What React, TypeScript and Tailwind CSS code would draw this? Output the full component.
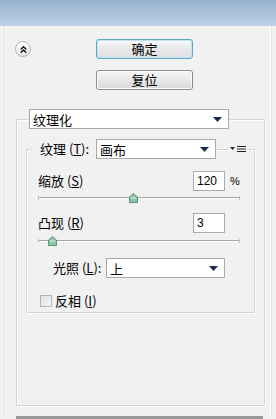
import { ChevronsUp } from "lucide-react";

function Arrow() {
  return (
    <svg width="9" height="5" viewBox="0 0 9 5">
      <path d="M0 0 H9 L4.5 5 Z" fill="#1c2a52" />
    </svg>
  );
}

function Select({ text, w }: { text: string; w: string }) {
  return (
    <div
      className={`${w} h-[20px] bg-white border border-[#a9a9a9] flex items-center justify-between pl-[3px] pr-[6px] text-[13px] leading-none text-black`}
    >
      <span>{text}</span>
      <Arrow />
    </div>
  );
}

function NumBox({ value }: { value: string }) {
  return (
    <div className="w-[32px] h-[20px] bg-white border border-[#a5acb5] flex items-center pl-[3px] text-[12px] text-black leading-none font-['Liberation_Sans',sans-serif]">
      {value}
    </div>
  );
}

function Slider({ pos }: { pos: number }) {
  return (
    <div className="relative h-[10px] w-[202px] flex items-center">
      <div className="w-full h-[2px] border-t border-[#a3a3a3] border-b border-b-white" />
      <div className="absolute left-0 top-[3px] w-[1px] h-[4px] bg-[#c0c0c0]" />
      <div className="absolute right-0 top-[3px] w-[1px] h-[4px] bg-[#c0c0c0]" />
      <svg
        className="absolute top-0"
        style={{ left: pos - 4 }}
        width="9"
        height="10"
        viewBox="0 0 9 10"
      >
        <path d="M4.5 0.5 L8.5 4 V9.5 H0.5 V4 Z" fill="#8fc4a8" stroke="#5f8f76" />
        <path d="M2 5 H7" stroke="#d8efe2" />
      </svg>
    </div>
  );
}

function MenuIcon() {
  return (
    <svg width="17" height="8" viewBox="0 0 17 8">
      <path d="M0 2 H5 L2.5 5 Z" fill="#222" />
      <path d="M7 1.5 H16 M7 4 H16 M7 6.5 H16" stroke="#222" strokeWidth="1" />
    </svg>
  );
}

export default function App() {
  return (
    <div className="w-[276px] h-[419px] bg-[#f1f1f1] overflow-hidden font-['SimSun','Noto_Sans_CJK_SC',sans-serif] text-[12px] text-black">
      <div className="h-[26px] bg-gradient-to-b from-[#97b1ce] to-[#bdd1e6]" />

      <div className="mx-[4px] h-[390px] border-x border-[#e2e2e2] shadow-[inset_1px_0_0_#fff,inset_-1px_0_0_#fff]">
        <div className="flex items-center pt-[13px]">
          <div className="ml-[10px] w-[16px] h-[16px] rounded-full border border-[#b5b5b5] bg-gradient-to-b from-white to-[#e4e4e4] flex items-center justify-center">
            <ChevronsUp size={11} strokeWidth={3} color="#111" />
          </div>
          <div className="ml-[65px] w-[97px] h-[20px] rounded-[3px] border border-[#5ea8bf] bg-gradient-to-b from-[#f7fbfc] via-[#eae7ea] to-[#dde0e2] shadow-[inset_0_0_0_1px_#bfe6f0] flex items-center justify-center text-[13px]">
            确定
          </div>
        </div>
        <div className="mt-[11px] ml-[91px] w-[97px] h-[20px] rounded-[3px] border border-[#8e8e8e] bg-gradient-to-b from-[#f6f6f6] to-[#dadada] shadow-[inset_0_0_0_1px_#fbfbfb] flex items-center justify-center text-[13px]">
          复位
        </div>

        <div className="mt-[29px] ml-[11px] w-[249px] h-[287px] border border-[#d4d4d4] shadow-[inset_1px_1px_0_#fff,1px_1px_0_#fff]">
          <div className="-mt-[11px] ml-[12px]">
            <Select text="纹理化" w="w-[200px]" />
          </div>

          <div className="mt-[20px] ml-[9px] w-[229px] h-[164px] border border-[#d4d4d4] shadow-[inset_1px_1px_0_#fff,1px_1px_0_#fff]">
            <div className="-mt-[11px] flex items-center">
              <div className="ml-[4px] bg-[#f1f1f1] pl-[9px] pr-[3px] w-[65px] text-[13px] whitespace-nowrap">
                纹理 (<span className="underline">T</span>):
              </div>
              <Select text="画布" w="w-[120px]" />
              <div className="ml-[12px] bg-[#f1f1f1] px-[2px] flex items-center">
                <MenuIcon />
              </div>
            </div>

            <div className="mt-[12px] flex items-center">
              <span className="ml-[11px] w-[155px] text-[13px]">
                缩放 (<span className="underline">S</span>)
              </span>
              <NumBox value="120" />
              <span className="ml-[5px] text-[11px] font-['Liberation_Sans',sans-serif]">%</span>
            </div>
            <div className="mt-[2px] ml-[11px]">
              <Slider pos={95} />
            </div>

            <div className="mt-[10px] flex items-center">
              <span className="ml-[11px] w-[155px] text-[13px]">
                凸现 (<span className="underline">R</span>)
              </span>
              <NumBox value="3" />
            </div>
            <div className="mt-[3px] ml-[11px]">
              <Slider pos={14} />
            </div>

            <div className="mt-[12px] flex items-center">
              <span className="ml-[26px] w-[53px] text-[13px] whitespace-nowrap">
                光照 (<span className="underline">L</span>):
              </span>
              <Select text="上" w="w-[119px]" />
            </div>

            <div className="mt-[13px] flex items-center">
              <div className="ml-[13px] w-[12px] h-[12px] border border-[#b0b6bd] bg-gradient-to-br from-[#dde1e5] to-[#f5f6f7]" />
              <span className="ml-[3px] text-[13px]">
                反相 (<span className="underline">I</span>)
              </span>
            </div>
          </div>
        </div>
      </div>
      <div className="ml-[16px] w-[247px] h-[3px] bg-[#999]" />
    </div>
  );
}
